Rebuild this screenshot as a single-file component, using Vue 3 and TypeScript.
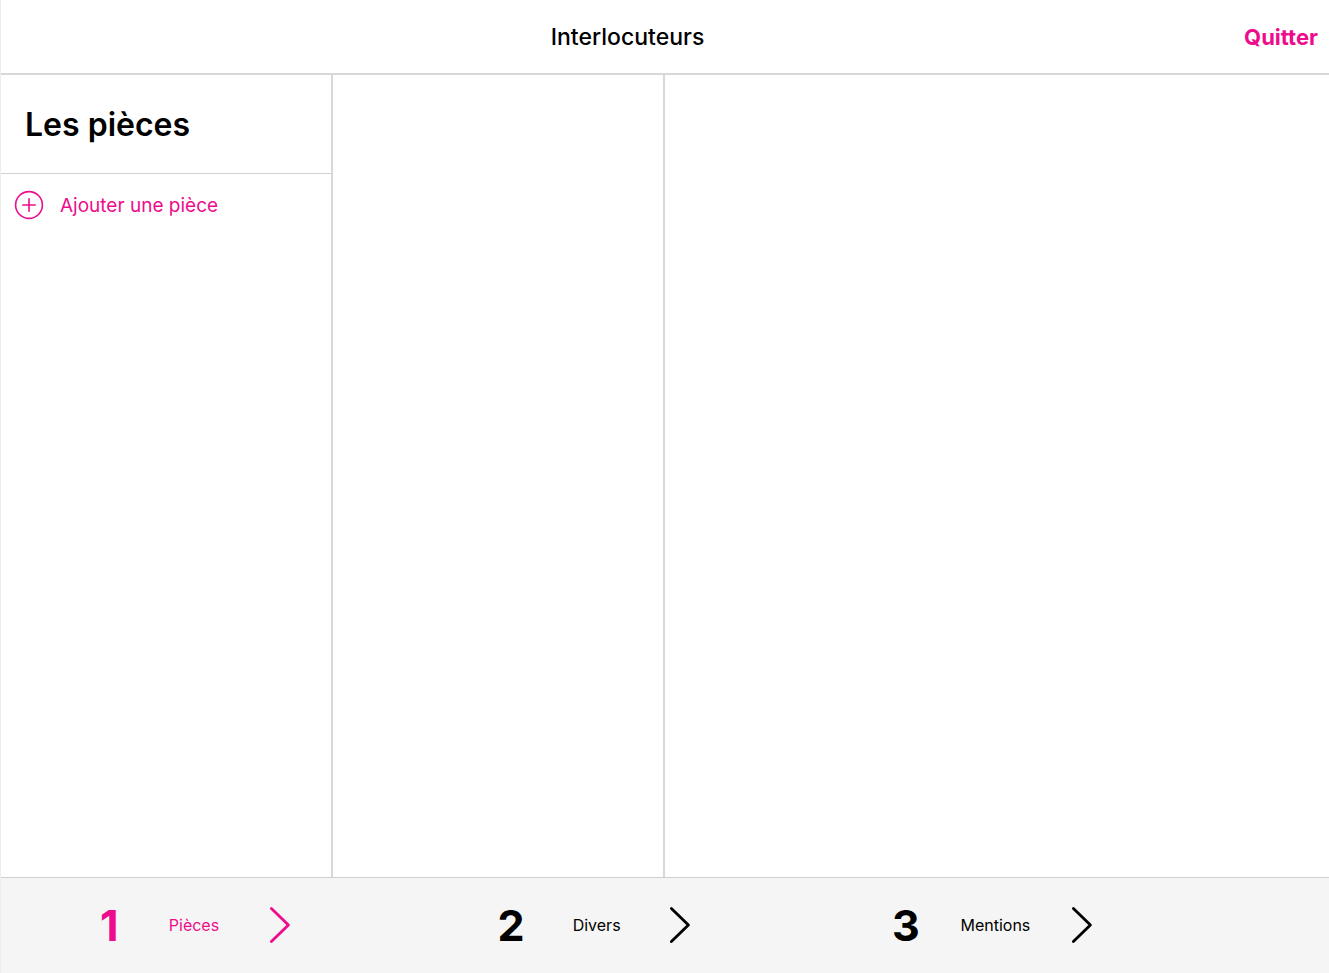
<script setup lang="ts">
import { ref } from 'vue'

interface Step {
  id: number
  label: string
}

const steps: Step[] = [
  { id: 1, label: 'Pièces' },
  { id: 2, label: 'Divers' },
  { id: 3, label: 'Mentions' },
]

const current = ref(1)
</script>

<template>
  <div class="page">
    <header class="topbar">
      <h1 class="title">Interlocuteurs</h1>
      <button type="button" class="quit">Quitter</button>
    </header>

    <main class="columns">
      <section class="column">
        <h2 class="heading">Les pièces</h2>
        <button type="button" class="add">
          <svg class="plus" viewBox="0 0 30 30" aria-hidden="true">
            <circle cx="15" cy="15" r="13.4" />
            <path d="M8.8 15H21.2M15 8.8V21.2" />
          </svg>
          <span>Ajouter une pièce</span>
        </button>
      </section>
      <section class="column"></section>
      <section class="column detail"></section>
    </main>

    <nav class="steps">
      <button
        v-for="step in steps"
        :key="step.id"
        type="button"
        class="step"
        :class="{ active: step.id === current }"
        @click="current = step.id"
      >
        <span class="number">{{ step.id }}</span>
        <span class="label">{{ step.label }}</span>
        <svg class="chevron" viewBox="0 0 22 38" aria-hidden="true">
          <path d="M2.4 2.4L19.4 19L2.4 35.6" />
        </svg>
      </button>
    </nav>
  </div>
</template>

<style>
body {
  margin: 0;
}
</style>

<style scoped>
.page {
  display: flex;
  flex-direction: column;
  box-sizing: border-box;
  min-height: 100vh;
  border-left: 1px solid #ededed;
  background: #fff;
  color: #000;
  font-family: Inter, "Liberation Sans", sans-serif;
}

button {
  margin: 0;
  padding: 0;
  border: 0;
  background: none;
  color: inherit;
  font: inherit;
  cursor: pointer;
}

.topbar {
  display: grid;
  grid-template-columns: 1fr auto;
  align-items: center;
  height: 73px;
  padding: 0 11px 0 10px;
  border-bottom: 2px solid #d8d8d8;
}

.title {
  margin: 0;
  text-align: center;
  font-size: 23px;
  line-height: 28px;
  font-weight: 500;
}

.topbar .quit {
  color: #ed0c8c;
  font-size: 22px;
  font-weight: 700;
}

.columns {
  flex: 1;
  display: grid;
  grid-template-columns: 1fr 1fr 2fr;
}

.column {
  border-right: 2px solid #d8d8d8;
}

.detail {
  border-right: 0;
}

.heading {
  margin: 0;
  padding: 29px 24px 27px;
  border-bottom: 1px solid #d0d0d0;
  font-size: 32px;
  line-height: 42px;
  font-weight: 600;
}

.column .add {
  display: flex;
  align-items: center;
  gap: 16px;
  padding: 16px 13px;
  color: #ed0c8c;
  font-size: 19px;
}

.plus {
  width: 30px;
  height: 30px;
  fill: none;
  stroke: currentColor;
  stroke-width: 1.6;
  stroke-linecap: round;
}

.steps {
  display: grid;
  grid-template-columns: repeat(3, 30%);
  height: 95px;
  border-top: 1px solid #cfcfcf;
  background: #f5f5f5;
}

.steps .step {
  display: flex;
  align-items: center;
  justify-content: space-around;
  padding: 0 83px 2px 74px;
}

.steps .active {
  color: #ed0c8c;
}

.number {
  font-size: 43px;
  font-weight: 700;
}

.label {
  font-size: 16px;
  line-height: 20px;
}

.chevron {
  width: 22px;
  height: 38px;
  fill: none;
  stroke: currentColor;
  stroke-width: 2.8;
  stroke-linecap: round;
  stroke-linejoin: round;
}
</style>
